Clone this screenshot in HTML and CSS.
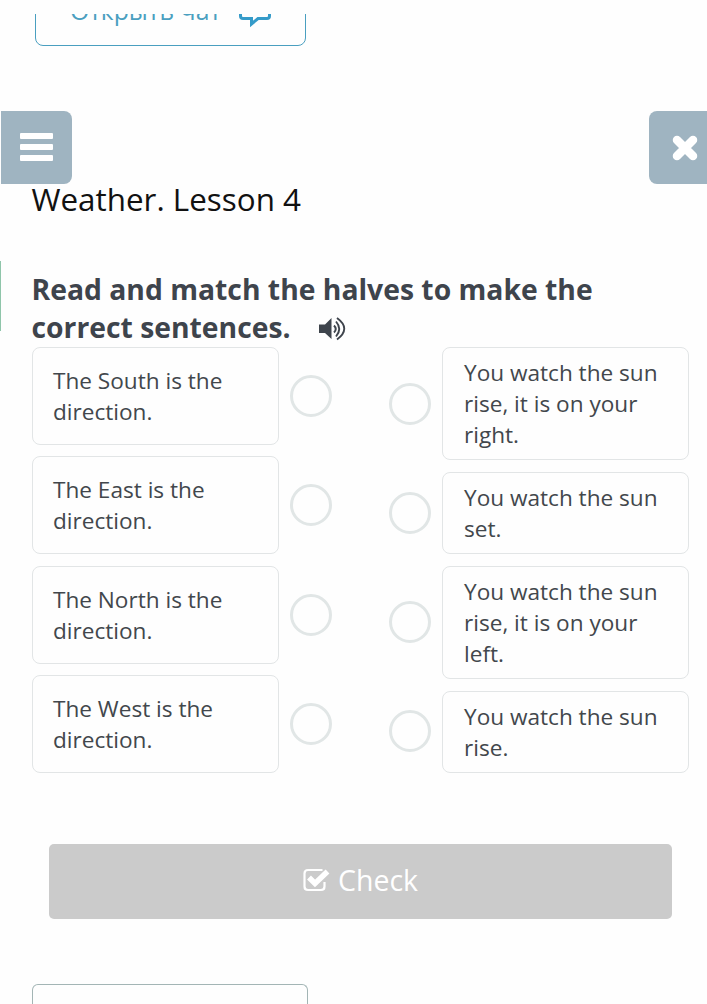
FILE: index.html
```html
<!DOCTYPE html>
<html lang="en">
<head>
    <meta charset="UTF-8">
    <title>Weather. Lesson 4</title>
    <link rel="stylesheet" href="styles.css">
</head>
<body>
    <div class="chat-bar">
        <button class="chat-btn">
            <span>Открыть чат</span>
            <svg class="chat-icon" width="32" height="32" viewBox="0 0 32 32">
                <path d="M4 2H28Q30.500 2 30.500 4.500V20Q30.500 22.500 28 22.500H19L12.500 28V22.500H4Q1.500 22.500 1.500 20V4.500Q1.500 2 4 2Z" fill="none" stroke="#359bc9" stroke-width="3"/>
            </svg>
        </button>
    </div>

    <div class="toolbar">
        <button class="tool-btn menu-btn">
            <svg width="33" height="29" viewBox="0 0 33 29" fill="#fff">
                <rect x="0" y="0" width="33" height="6" rx="1"/>
                <rect x="0" y="11" width="33" height="6" rx="1"/>
                <rect x="0" y="22" width="33" height="6" rx="1"/>
            </svg>
        </button>
        <button class="tool-btn close-btn">
            <svg width="26" height="26" viewBox="0 0 26 26">
                <path d="M5 5L21 21M21 5L5 21" stroke="#fff" stroke-width="8.500" stroke-linecap="round"/>
            </svg>
        </button>
    </div>

    <h1>Weather. Lesson 4</h1>

    <div class="task">
        <h2>Read and match the halves to make the correct sentences.
            <svg class="sound" width="28" height="24" viewBox="0 0 28 24">
                <path d="M0 7.500H6L12.500 1V22L6 16H0Z" fill="#3e444c"/>
                <path d="M15 8.500Q18.500 12 15 15.500M17 4.500Q23.500 12 17 19.500M18 1Q32.500 11.500 18 22.500" fill="none" stroke="#3e444c" stroke-width="1.900"/>
            </svg>
        </h2>
    </div>

    <div class="match">
        <div class="column left">
            <div class="card">The South is the direction.</div>
            <div class="card">The East is the direction.</div>
            <div class="card">The North is the direction.</div>
            <div class="card">The West is the direction.</div>
        </div>
        <div class="dots dots-left">
            <span class="dot"></span>
            <span class="dot"></span>
            <span class="dot"></span>
            <span class="dot"></span>
        </div>
        <div class="dots dots-right">
            <span class="dot"></span>
            <span class="dot"></span>
            <span class="dot"></span>
            <span class="dot"></span>
        </div>
        <div class="column right">
            <div class="card">You watch the sun rise, it is on your right.</div>
            <div class="card">You watch the sun set.</div>
            <div class="card">You watch the sun rise, it is on your left.</div>
            <div class="card">You watch the sun rise.</div>
        </div>
    </div>

    <button class="check-btn">
        <svg width="27" height="24" viewBox="0 0 27 24" fill="none" stroke="#fff">
            <path d="M19.500 2H5Q1.500 2 1.500 5.500V18.500Q1.500 22 5 22H18Q21.500 22 21.500 18.500V14" stroke-width="2.200"/>
            <path d="M6 9.500L12 15.500L24.500 3.500" stroke-width="5.500"/>
        </svg>
        <span>Check</span>
    </button>

    <div class="bottom-box"></div>
</body>
</html>
```

FILE: styles.css
```css
* {
    box-sizing: border-box;
}

body {
    margin: 0;
    height: 1004px;
    overflow: hidden;
    background-color: #fefefe;
    font-family: "Open Sans", "Noto Sans", sans-serif;
    color: #42474c;
}

button {
    font-family: inherit;
    border: none;
    padding: 0;
}

/* scrolled chat button, only its lower part is visible */
.chat-bar {
    display: flex;
    align-items: flex-end;
    height: 32px;
    margin-top: 14px;
    padding-left: 35px;
    overflow: hidden;
}

.chat-btn {
    display: flex;
    flex-shrink: 0;
    justify-content: center;
    align-items: center;
    gap: 18px;
    width: 271px;
    height: 72px;
    border: 1px solid #4a9fc0;
    border-radius: 8px;
    background-color: transparent;
    color: #4a9fc0;
    font-size: 24.800px;
}

.chat-icon {
    margin-top: 4px;
}

.toolbar {
    display: flex;
    justify-content: space-between;
    margin-top: 65px;
    padding-left: 1px;
}

.tool-btn {
    display: flex;
    align-items: center;
    height: 73px;
    background-color: #9fb4c1;
}

.menu-btn {
    width: 71px;
    padding-left: 19px;
    border-radius: 0 8px 8px 0;
}

.close-btn {
    width: 58px;
    padding-left: 23px;
    border-radius: 8px 0 0 8px;
}

h1 {
    margin: -7px 0 0 31.500px;
    font-size: 31.400px;
    font-weight: 400;
    line-height: 44px;
    color: #111;
}

.task {
    height: 70px;
    margin-top: 40px;
    border-left: 1px solid #8fc5aa;
}

h2 {
    width: 600px;
    margin: 0 0 0 30.500px;
    padding-top: 9px;
    font-size: 28.300px;
    font-weight: 700;
    line-height: 38px;
    color: #3e444c;
}

.sound {
    margin-left: 21px;
    vertical-align: -3px;
}

.match {
    display: flex;
    height: 426px;
    margin: 16px 18px 0 32px;
}

.column {
    display: flex;
    flex-direction: column;
    justify-content: space-between;
    width: 247px;
}

.card {
    display: flex;
    align-items: center;
    padding: 0 20px;
    border: 1px solid #e2e5e6;
    border-radius: 8px;
    font-size: 22.600px;
    line-height: 31px;
}

.left .card {
    height: 98px;
}

.right .card {
    padding: 9px 20px 9px 21px;
}

.dots {
    display: flex;
    flex-direction: column;
    justify-content: space-between;
    height: 370px;
}

.dots-left {
    margin: 28px 0 0 11px;
}

.dots-right {
    margin: 35.500px 11px 0 57px;
}

.dot {
    width: 42px;
    height: 42px;
    border: 3px solid #e1e6e6;
    border-radius: 50%;
}

.check-btn {
    display: flex;
    justify-content: center;
    align-items: center;
    gap: 8px;
    width: 623px;
    height: 75px;
    margin: 71px 0 0 49px;
    padding-bottom: 4px;
    border-radius: 5px;
    background-color: #cbcbcb;
    color: #fff;
    font-size: 28.500px;
}

.bottom-box {
    width: 276px;
    height: 20px;
    margin: 65px 0 0 32px;
    border: 1px solid #a3b5b5;
    border-bottom: none;
    border-radius: 6px 6px 0 0;
}
```
